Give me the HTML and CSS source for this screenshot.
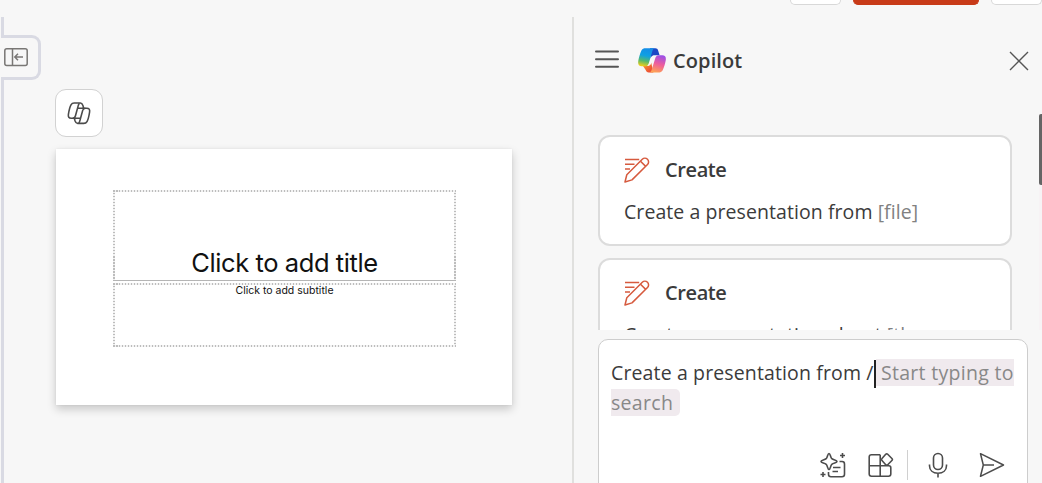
FILE: index.html
```html
<!DOCTYPE html>
<html lang="en">
<head>
<meta charset="utf-8">
<title>Presentation</title>
<link rel="stylesheet" href="styles.css">
</head>
<body>
<svg width="0" height="0" class="defs" aria-hidden="true">
  <defs>
    <symbol id="pencil" viewBox="0 0 26 26">
      <g fill="none" stroke="#d65a3e" stroke-width="1.5" stroke-linejoin="round">
        <path d="M1 25 2.800 17.800 18.300 2.300a3.600 3.600 0 0 1 5.200 5.200L8 22.900Z"/>
        <path d="m16.500 4.200 5.200 5.200M1 2.500h14.200M1 7.200h9.500M1 11.900h5"/>
      </g>
    </symbol>
  </defs>
</svg>
<div class="toolbar">
  <div class="tool"></div><div class="tool tool-primary"></div><div class="tool"></div>
</div>
<main class="workspace">
  <aside class="rail">
    <div class="rail-line rail-top"></div>
    <div class="rail-tab">
      <svg width="24" height="19" viewBox="0 0 24 19" fill="none" stroke="#797775" stroke-width="1.5"><rect x=".8" y=".8" width="22.4" height="16.8" rx="2"/><path d="M8.500 1v16.500M19 9h-8M14 5.800 10.800 9l3.200 3.200"/></svg>
    </div>
    <div class="rail-line rail-rest"></div>
  </aside>
  <section class="editor">
    <div class="copilot-button">
      <svg width="24" height="23" viewBox="0 0 24 23" fill="none" stroke="#4b4b4b" stroke-width="1.6" stroke-linejoin="round"><path d="M8.500 16.200H4.200Q.8 16.200 1.400 12.400C2 8.400 2.600 5.300 4 2.800 4.800 1.400 5.800 1 7.200 1h6.200c1.600 0 2 1 2.500 2.400l.8 2.800"/><path d="M15.500 6.200h4.300q3.400 0 2.800 3.800c-.6 4-1.200 7.100-2.600 9.600-.8 1.400-1.800 1.800-3.200 1.800h-6.200c-1.600 0-2-1-2.500-2.400l-.8-2.800"/><path d="M12.400 1.200c-1 1.100-1.200 2.400-1.700 4.400L8.400 14c-.5 1.700-1.300 2.200-2.700 2.200M11.700 21.200c1-1.100 1.200-2.400 1.700-4.400L15.700 8.400c.5-1.700 1.300-2.200 2.700-2.200M11 6.200h5M8 16.200h5.500"/></svg>
    </div>
    <div class="slide">
      <div class="placeholder placeholder-title"><span class="slide-title">Click to add title</span></div>
      <div class="placeholder placeholder-subtitle"><span class="slide-subtitle">Click to add subtitle</span></div>
    </div>
  </section>
  <section class="panel">
    <header class="panel-header">
      <svg class="menu" width="24" height="19" viewBox="0 0 24 19" stroke="#555" stroke-width="2" stroke-linecap="round"><path d="M1 1.500h22M1 9.200h22M1 16.800h22"/></svg>
      <svg class="logo" width="28" height="25" viewBox="0 0 28 25">
        <defs>
          <linearGradient id="cool" x1=".5" y1="0" x2=".3" y2="1"><stop offset="0" stop-color="#148de8"/><stop offset=".4" stop-color="#0fa0e2"/><stop offset=".7" stop-color="#55b96e"/><stop offset="1" stop-color="#f4cf16"/></linearGradient>
          <linearGradient id="warm" x1=".7" y1="0" x2=".4" y2="1"><stop offset="0" stop-color="#9b4fe8"/><stop offset=".5" stop-color="#ee5d9c"/><stop offset="1" stop-color="#ffa354"/></linearGradient>
          <linearGradient id="orange" x1="0" y1="0" x2="1" y2="1"><stop offset="0" stop-color="#f9a02c"/><stop offset="1" stop-color="#e9393a"/></linearGradient>
        </defs>
        <path fill="#1b48c5" d="M12 .3h5.300c1.600 0 2.400.8 2.900 2.400l1.400 4.600h-5.200c-2.200 0-3.300 1.400-3.800 3.500Z"/>
        <path fill="url(#orange)" d="M5 18h4.400c2.100 0 3.200-1.200 3.800-3.400l2.200 9.800H10.700c-1.700 0-2.500-1-3-2.500Z"/>
        <path fill="url(#cool)" d="M7.800.3h9.300c-1.700 0-2.400 1.500-3 3.600l-3.200 11c-.6 2-1.600 3.400-3.800 3.400H3.700C.6 18.300-.3 16 .3 12.800 1 9 2 5.500 3.300 2.700 4.200.9 5.700.3 7.800.3Z"/>
        <path fill="url(#warm)" d="M20.200 24.500h-9.300c1.700 0 2.400-1.500 3-3.600l3.200-10.200c.6-2 1.600-3.400 3.800-3.400h3.400c3.100 0 4 2.100 3.400 5.300-.7 3.800-1.700 7.100-3 9.600-.9 1.800-2.400 2.300-4.500 2.300Z"/>
        <path fill="#f7f7f7" d="M16.300 7.400c-2.100.3-3.100 1.700-3.700 3.700l-1.400 4.600c-.3 1-.8 1.700-1.400 2.200 2-.2 3.200-1.500 3.900-3.600l1.400-4.600c.3-1.100.7-1.800 1.200-2.300Z"/>
      </svg>
      <h1 class="panel-name">Copilot</h1>
      <svg class="close" width="20" height="20" viewBox="0 0 20 20" stroke="#555" stroke-width="1.4"><path d="m1 1 18 18M19 1 1 19"/></svg>
    </header>
    <div class="suggestions">
      <div class="cards">
        <article class="card">
          <div class="card-head"><svg width="26" height="26"><use href="#pencil"/></svg><h2 class="card-title">Create</h2></div>
          <p class="card-text">Create a presentation from <span class="slot">[file]</span></p>
        </article>
        <article class="card">
          <div class="card-head"><svg width="26" height="26"><use href="#pencil"/></svg><h2 class="card-title">Create</h2></div>
          <p class="card-text">Create a presentation about <span class="slot">[th</span></p>
        </article>
      </div>
      <div class="scrollbar"><div class="thumb"></div></div>
    </div>
    <div class="composer">
      <p class="prompt">Create a presentation from /<span class="caret"></span><span class="hint"> Start typing to<br>search&nbsp;</span></p>
      <div class="actions">
        <svg width="26" height="26" viewBox="0 0 26 26" fill="none" stroke="#4c4c4c" stroke-width="1.6" stroke-linejoin="round"><path d="M9 1.500C10.400 1.500 10.300 5.100 11.800 6.700 13.400 8.200 17 8.100 17 9.500S13.400 10.800 11.800 12.300C10.300 13.900 10.400 17.500 9 17.500S7.700 13.900 6.200 12.300C4.600 10.800 1 10.900 1 9.500S4.600 8.200 6.200 6.700C7.700 5.100 7.600 1.500 9 1.500Z"/><path d="M19.500 9.500h2.600q2.400 0 2.400 2.400v10.300q0 2.500-2.500 2.500H11q-2.500 0-2.500-2.500V20M13 15.500h7.500M12.500 19.500h5.500M22.500 1v5M20 3.500h5M3 20v5M.5 22.500h5"/></svg>
        <svg width="26" height="26" viewBox="0 0 26 26" fill="none" stroke="#4c4c4c" stroke-width="1.6" stroke-linejoin="round"><path d="M12.200 2.800H3.500Q1.200 2.800 1.200 5v17q0 2.200 2.300 2.200h17q2.300 0 2.300-2.200v-6.300q0-2-2-2H1.200M12.200 2.800v21.400M14 6.500 17.700 2.300q1-1 2 0l4.200 4.200q1 1 0 2l-4.200 4.200q-1 1-2 0L14 8.500q-1-1 0-2Z"/></svg>
        <span class="divider"></span>
        <svg class="mic" width="20" height="26" viewBox="0 0 20 26" fill="none" stroke="#4c4c4c" stroke-width="1.600"><rect x="5.500" y="1.500" width="9" height="16" rx="4.500"/><path d="M1.500 12.500v1.300c0 4.600 3.500 7.400 8.500 7.400s8.500-2.800 8.500-7.400v-1.300M10 21v4.500"/></svg>
        <svg class="send" width="26" height="26" viewBox="0 0 26 26" fill="none" stroke="#4c4c4c" stroke-width="1.500" stroke-linejoin="round"><path d="M1.500 1.700 24.500 13 1.500 24.300 4.300 13ZM4.300 13H15"/></svg>
      </div>
    </div>
  </section>
</main>
</body>
</html>
```

FILE: styles.css
```css
* { box-sizing: border-box; }
body { margin: 0; width: 1042px; height: 483px; overflow: hidden; background: #f7f7f7; color: #3b3b3b; font-family: "Open Sans", sans-serif; }
h1, h2, p { margin: 0; }
svg { display: block; flex: none; }
.defs { position: absolute; }

.toolbar { height: 17px; padding: 0 0 0 790px; display: flex; gap: 12px; }
.tool { height: 5px; width: 51px; flex: none; background: #fff; border: 1px solid #d8d8d8; border-top: 0; border-radius: 0 0 6px 6px; }
.tool-primary { width: 126px; background: #c83b19; border-color: #c83b19; }

.workspace { display: flex; height: 466px; }
.rail { width: 41px; display: flex; flex-direction: column; }
.rail-line { margin-left: 1px; border-left: 3px solid #d9dae3; }
.rail-top { height: 18px; }
.rail-rest { flex: 1; }
.rail-tab { height: 45px; margin-left: 1px; padding: 10px 0 0 3px; border: 3px solid #d9dae3; border-left: 0; border-radius: 0 9px 9px 0; }

.editor { width: 531px; padding: 72px 0 0 14px; }
.copilot-button { width: 48px; height: 48px; display: grid; place-items: center; background: #fff; border: 1px solid #d2d2d2; border-radius: 11px; }
.slide { width: 456px; height: 256px; margin: 12px 0 0 1px; padding: 41px 57px 0; background: #fff; box-shadow: 0 4px 9px #0003, 0 0 2px #0001; }
.placeholder {
  --dash: #bdbdbd 0 1.5px, #f2f2f2 1.5px 3px;
  width: 343px; display: flex; justify-content: center; color: #111; white-space: nowrap;
  background:
    repeating-linear-gradient(90deg, var(--dash)) top / 100% 2px no-repeat,
    repeating-linear-gradient(90deg, var(--dash)) bottom / 100% 2px no-repeat,
    repeating-linear-gradient(var(--dash)) left / 2px 100% no-repeat,
    repeating-linear-gradient(var(--dash)) right / 2px 100% no-repeat;
}
.placeholder-title { height: 91px; align-items: flex-end; padding-bottom: 3px; border-bottom: 1px solid #b5b5b5; background-size: 100% 2px, 0 0, 2px 100%, 2px 100%; }
.placeholder-subtitle { height: 64px; margin-top: 2px; padding-top: 2px; }
.slide-title { font: 25.500px/28px Inter, sans-serif; letter-spacing: -0.42px; }
.slide-subtitle { font: 10.500px/12px Inter, sans-serif; }

.panel { width: 470px; border-left: 2px solid #e0e0de; }
.panel-header { height: 97px; padding: 22px 13px 0 21px; display: flex; align-items: flex-start; }
.menu { margin-top: 11px; }
.logo { margin: 9px 0 0 19px; }
.panel-name { margin: 8px 0 0 7px; font-size: 20px; line-height: 28px; font-weight: 600; letter-spacing: .1px; }
.close { margin: 12px 0 0 auto; }
.suggestions { height: 216px; display: flex; justify-content: space-between; overflow: hidden; }
.cards { padding: 21px 0 0 24px; display: flex; flex-direction: column; gap: 12px; }
.card { width: 414px; height: 111px; flex: none; padding: 19px 24px; background: #fff; border: 2px solid #dcdcdc; border-radius: 12px; }
.card-head { display: flex; align-items: center; gap: 15px; height: 28px; }
.card-title { font-size: 20px; line-height: 28px; font-weight: 600; letter-spacing: -.4px; }
.card-text { margin-top: 14px; font-size: 19.500px; line-height: 28px; letter-spacing: .07px; white-space: nowrap; }
.slot { color: #818181; }
.scrollbar { width: 3px; background: #f7f3f5; }
.thumb { height: 71px; background: #656565; border-radius: 2px 0 0 2px; }
.composer { width: 430px; height: 160px; margin: 9px 0 0 24px; padding: 18px 10px 0 12px; background: #fff; border: 1px solid #cdcdcd; border-radius: 10px; }
.prompt { font-size: 19.500px; line-height: 30px; letter-spacing: .13px; white-space: nowrap; }
.hint { color: #888; background: #f0eaee; border-radius: 0 5px 5px 0; padding-right: 1px; letter-spacing: .3px; }
.caret { display: inline-block; width: 2px; height: 28px; background: #222; vertical-align: -8px; }
.actions { height: 30px; margin: 32px 0 0 209px; display: flex; align-items: center; gap: 22px; }
.divider { width: 1px; height: 30px; margin: 0 -10px 0 -9px; background: #d0d0d0; }
.mic { margin-left: 8px; }
.send { margin-left: 9px; }
```
